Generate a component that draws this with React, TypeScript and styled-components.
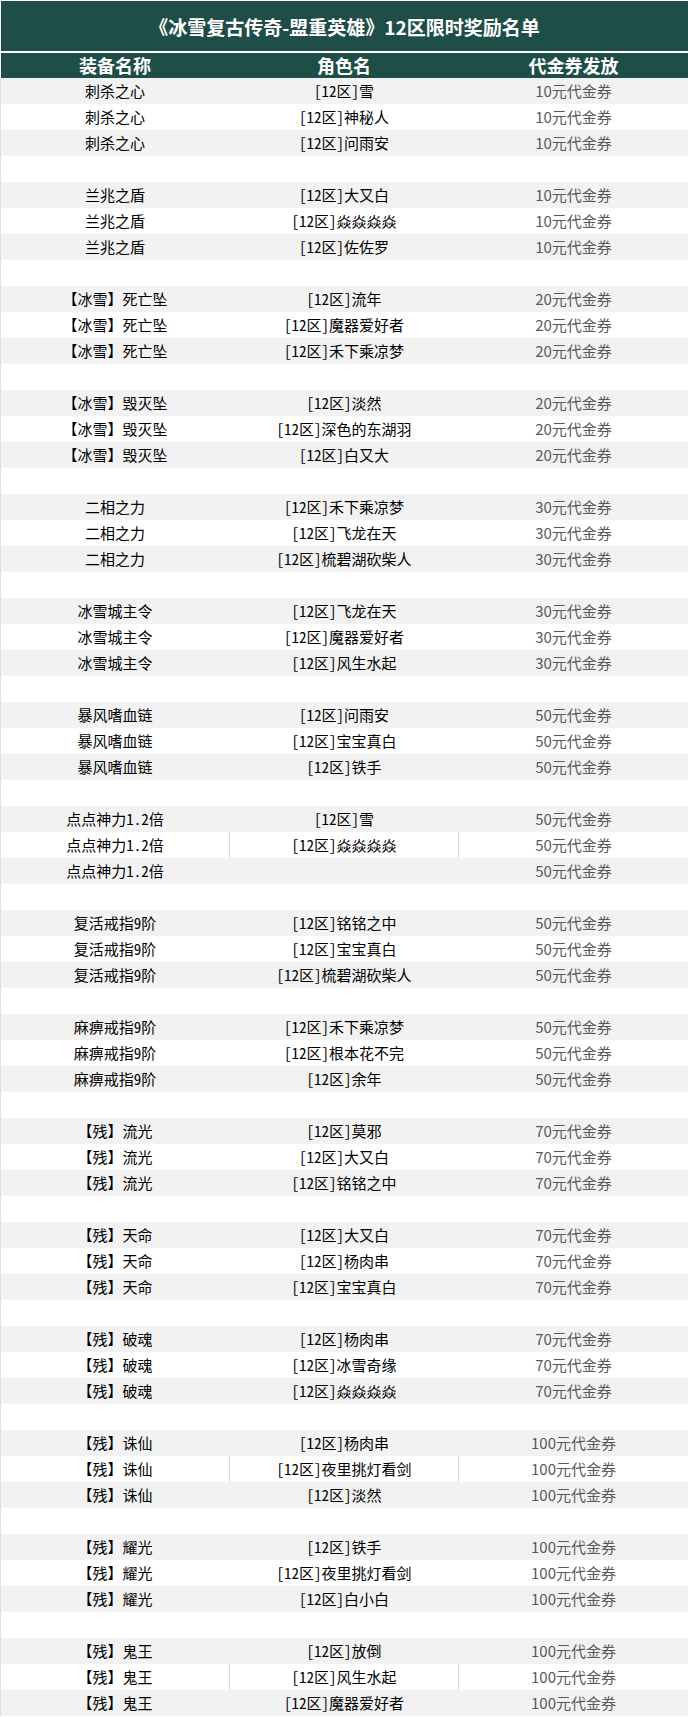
import React from "react";
import styled, { createGlobalStyle } from "styled-components";

const Global = createGlobalStyle`
  html, body { margin: 0; padding: 0; background: #ffffff; }
  body { width: 688px; }
`;

const Page = styled.div`
  width: 688px;
  padding-top: 1px;
  background: #ffffff;
  font-family: "Noto Sans CJK SC", "Noto Sans", sans-serif;
`;

const TitleBar = styled.div`
  margin-left: 1px;
  height: 50px;
  background: #1f4e48;
  color: #ffffff;
  display: flex;
  align-items: center;
  justify-content: center;
  font-size: 19px;
  font-weight: 700;
  letter-spacing: 0;
`;

const HeaderRow = styled.div`
  margin-top: 2px;
  margin-left: 1px;
  height: 25px;
  background: #1f4e48;
  display: grid;
  grid-template-columns: 228px 230px 229px;
`;

const HeaderCell = styled.div`
  display: flex;
  align-items: center;
  justify-content: center;
  color: #ffffff;
  font-size: 18px;
  font-weight: 700;
  line-height: 25px;
`;

const Body = styled.div`
  border-left: 1px solid #e0e0e0;
`;

const Row = styled.div<{ $shaded: boolean }>`
  height: 26px;
  display: grid;
  grid-template-columns: 228px 230px 229px;
  background: ${(p) => (p.$shaded ? "#f2f2f2" : "#ffffff")};
`;

const Cell = styled.div<{ $lined?: boolean }>`
  display: flex;
  align-items: center;
  justify-content: center;
  line-height: 26px;
  font-size: 15px;
  color: #000000;
  white-space: nowrap;
  font-family: "Noto Sans Mono CJK SC", "Noto Sans CJK SC", sans-serif;
  font-feature-settings: "hwid" 1;
  box-shadow: ${(p) =>
    p.$lined ? "inset 1px 0 0 #d9d9d9, inset -1px 0 0 #d9d9d9" : "none"};
`;

const RewardCell = styled.div`
  display: flex;
  align-items: center;
  justify-content: center;
  line-height: 26px;
  font-size: 15px;
  color: #595959;
  white-space: nowrap;
  font-family: "Noto Sans CJK SC", sans-serif;
`;

type Group = { item: string; reward: string; players: string[]; lined?: number };

const groups: Group[] = [
  { item: "刺杀之心", reward: "10元代金券", players: ["雪", "神秘人", "问雨安"] },
  { item: "兰兆之盾", reward: "10元代金券", players: ["大又白", "焱焱焱焱", "佐佐罗"] },
  { item: "【冰雪】死亡坠", reward: "20元代金券", players: ["流年", "魔器爱好者", "禾下乘凉梦"] },
  { item: "【冰雪】毁灭坠", reward: "20元代金券", players: ["淡然", "深色的东湖羽", "白又大"] },
  { item: "二相之力", reward: "30元代金券", players: ["禾下乘凉梦", "飞龙在天", "梳碧湖砍柴人"] },
  { item: "冰雪城主令", reward: "30元代金券", players: ["飞龙在天", "魔器爱好者", "风生水起"] },
  { item: "暴风嗜血链", reward: "50元代金券", players: ["问雨安", "宝宝真白", "铁手"] },
  { item: "点点神力1.2倍", reward: "50元代金券", players: ["雪", "焱焱焱焱", ""], lined: 1 },
  { item: "复活戒指9阶", reward: "50元代金券", players: ["铭铭之中", "宝宝真白", "梳碧湖砍柴人"] },
  { item: "麻痹戒指9阶", reward: "50元代金券", players: ["禾下乘凉梦", "根本花不完", "余年"] },
  { item: "【残】流光", reward: "70元代金券", players: ["莫邪", "大又白", "铭铭之中"] },
  { item: "【残】天命", reward: "70元代金券", players: ["大又白", "杨肉串", "宝宝真白"] },
  { item: "【残】破魂", reward: "70元代金券", players: ["杨肉串", "冰雪奇缘", "焱焱焱焱"] },
  { item: "【残】诛仙", reward: "100元代金券", players: ["杨肉串", "夜里挑灯看剑", "淡然"], lined: 1 },
  { item: "【残】耀光", reward: "100元代金券", players: ["铁手", "夜里挑灯看剑", "白小白"] },
  { item: "【残】鬼王", reward: "100元代金券", players: ["放倒", "风生水起", "魔器爱好者"], lined: 1 },
];

type RowData = { key: string; item: string; player: string; reward: string; lined: boolean } | null;

const rows: RowData[] = [];
groups.forEach((g, gi) => {
  if (gi > 0) rows.push(null);
  g.players.forEach((p, pi) => {
    rows.push({
      key: `${gi}-${pi}`,
      item: g.item,
      player: p ? `[12区]${p}` : "",
      reward: g.reward,
      lined: g.lined === pi,
    });
  });
});

export default function App() {
  return (
    <Page>
      <Global />
      <TitleBar>《冰雪复古传奇-盟重英雄》12区限时奖励名单</TitleBar>
      <HeaderRow>
        <HeaderCell>装备名称</HeaderCell>
        <HeaderCell>角色名</HeaderCell>
        <HeaderCell>代金券发放</HeaderCell>
      </HeaderRow>
      <Body>
        {rows.map((r, i) =>
          r ? (
            <Row key={r.key} $shaded={i % 2 === 0}>
              <Cell>{r.item}</Cell>
              <Cell $lined={r.lined}>{r.player}</Cell>
              <RewardCell>{r.reward}</RewardCell>
            </Row>
          ) : (
            <Row key={`blank-${i}`} $shaded={i % 2 === 0}>
              <Cell />
              <Cell />
              <RewardCell />
            </Row>
          )
        )}
      </Body>
    </Page>
  );
}
